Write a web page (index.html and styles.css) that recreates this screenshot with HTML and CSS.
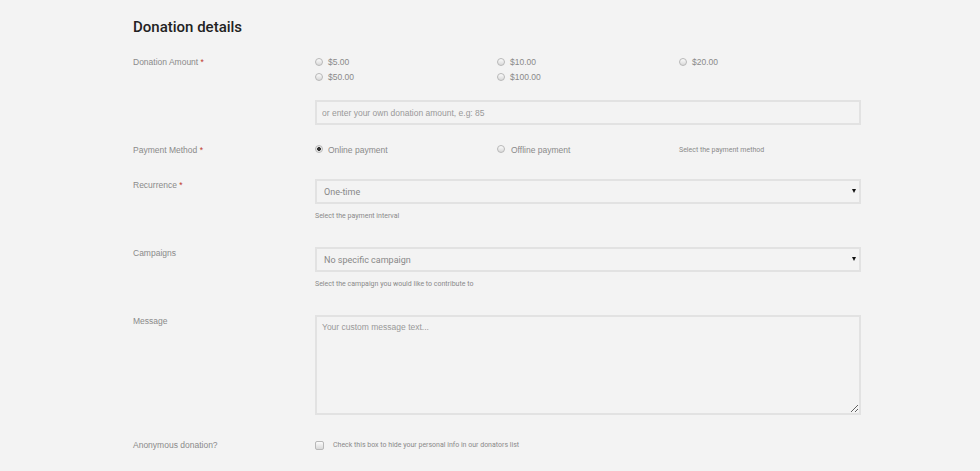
FILE: index.html
```html
<!DOCTYPE html>
<html lang="en">
<head>
    <meta charset="UTF-8">
    <meta name="viewport" content="width=device-width, initial-scale=1.0">
    <title>Donation details</title>
    <link rel="stylesheet" href="styles.css">
</head>
<body>
    <div class="container">
        <h2>Donation details</h2>
        <form id="donation-form">
            <div class="row row-amount">
                <label>Donation Amount <span class="req">*</span></label>
                <div class="field">
                    <div class="choices">
                        <label class="choice"><input type="radio" name="amount" value="5"> $5.00</label>
                        <label class="choice"><input type="radio" name="amount" value="10"> $10.00</label>
                        <label class="choice"><input type="radio" name="amount" value="20"> $20.00</label>
                        <label class="choice"><input type="radio" name="amount" value="50"> $50.00</label>
                        <label class="choice"><input type="radio" name="amount" value="100"> $100.00</label>
                    </div>
                    <input type="text" class="text-input own-amount" placeholder="or enter your own donation amount, e.g: 85">
                </div>
            </div>

            <div class="row row-payment">
                <label>Payment Method <span class="req">*</span></label>
                <div class="choices inline">
                    <label class="choice"><input type="radio" name="payment" value="online" checked> Online payment</label>
                    <label class="choice"><input type="radio" name="payment" value="offline"> Offline payment</label>
                    <p class="hint hint-side">Select the payment method</p>
                </div>
            </div>

            <div class="row row-recurrence">
                <label>Recurrence <span class="req">*</span></label>
                <div class="field">
                    <div class="select-wrap">
                        <select>
                            <option>One-time</option>
                            <option>Monthly</option>
                            <option>Yearly</option>
                        </select>
                    </div>
                    <p class="hint">Select the payment interval</p>
                </div>
            </div>

            <div class="row row-campaigns">
                <label>Campaigns</label>
                <div class="field">
                    <div class="select-wrap">
                        <select>
                            <option>No specific campaign</option>
                        </select>
                    </div>
                    <p class="hint">Select the campaign you would like to contribute to</p>
                </div>
            </div>

            <div class="row row-message">
                <label>Message</label>
                <div class="field">
                    <textarea placeholder="Your custom message text..."></textarea>
                </div>
            </div>

            <div class="row row-anonymous">
                <label>Anonymous donation?</label>
                <label class="check">
                    <input type="checkbox" name="anonymous">
                    <span class="hint">Check this box to hide your personal info in our donators list</span>
                </label>
            </div>
        </form>
    </div>
</body>
</html>
```

FILE: styles.css
```css
body {
    font-family: "Liberation Sans", Arial, sans-serif;
    margin: 0;
    padding: 0;
    background-color: #f3f3f3;
    color: #888;
}
.container {
    width: 728px;
    padding: 18px 0 0 133px;
}
h2 {
    font-family: Roboto, "Liberation Sans", sans-serif;
    font-weight: 500;
    font-size: 15px;
    line-height: 18px;
    color: #222;
    margin: 0 0 19px;
}
.row {
    display: grid;
    grid-template-columns: 182px 546px;
    font-size: 8.5px;
}
.row > label {
    line-height: 12px;
    color: #8a8a8a;
}
.req {
    color: #c0392b;
}
.row-payment {
    margin-top: 19px;
}
.row-recurrence {
    margin-top: 23px;
}
.row-campaigns {
    margin-top: 26px;
}
.row-message {
    margin-top: 26px;
}
.row-anonymous {
    margin-top: 24px;
}
.choices {
    display: grid;
    grid-template-columns: 182px 182px 182px;
}
.row-amount > label {
    margin-top: 1px;
}
.choice {
    display: flex;
    align-items: center;
    line-height: 15px;
    color: #8a8a8a;
    font-size: 8.5px;
}
.row-payment .choice {
    line-height: 12px;
}
input[type="radio"],
input[type="checkbox"] {
    appearance: none;
    width: 8px;
    height: 8px;
    margin: 0 5px 0 0;
    border: 1px solid #b8b8b8;
    background: linear-gradient(#fbfbfb, #d9d9d9);
    flex: none;
}
input[type="radio"] {
    border-radius: 50%;
    position: relative;
    top: -1px;
}
input[type="radio"]:checked {
    background: radial-gradient(circle, #333 0, #333 1.6px, #e8e8e8 2.2px);
}
.row-payment .choice:nth-child(2) input {
    margin-right: 6px;
}
input[type="checkbox"] {
    border-radius: 2px;
    width: 9px;
    height: 9px;
    margin: 0 9px 0 0;
}
.text-input,
select,
textarea {
    display: block;
    box-sizing: border-box;
    width: 100%;
    border: 2px solid #e2e2e2;
    background: #f3f3f3;
    border-radius: 0;
    outline: none;
    color: #8a8a8a;
}
.text-input {
    margin-top: 15px;
    height: 25px;
    padding: 0 5px;
    font-family: "Liberation Sans", Arial, sans-serif;
    font-size: 8.5px;
}
.text-input::placeholder,
textarea::placeholder {
    color: #999;
}
.select-wrap {
    position: relative;
}
.select-wrap::after {
    content: "";
    position: absolute;
    right: 5px;
    top: 10px;
    border-left: 2.5px solid transparent;
    border-right: 2.5px solid transparent;
    border-top: 4px solid #111;
}
select {
    appearance: none;
    height: 25px;
    padding: 0 7px;
    font-family: Roboto, "Liberation Sans", sans-serif;
    font-size: 9px;
    color: #888;
}
textarea {
    height: 100px;
    padding: 5px 5px;
    font-family: "Liberation Sans", Arial, sans-serif;
    font-size: 8.5px;
    resize: vertical;
}
.hint {
    font-family: Roboto, "Liberation Sans", sans-serif;
    font-size: 7px;
    line-height: 10px;
    color: #8a8a8a;
    margin: 7px 0 0;
}
.hint-side {
    margin: 0;
    line-height: 12px;
}
.check {
    display: flex;
    align-items: center;
    line-height: 12px;
}
.check .hint {
    margin: 0;
    line-height: 12px;
}
```
